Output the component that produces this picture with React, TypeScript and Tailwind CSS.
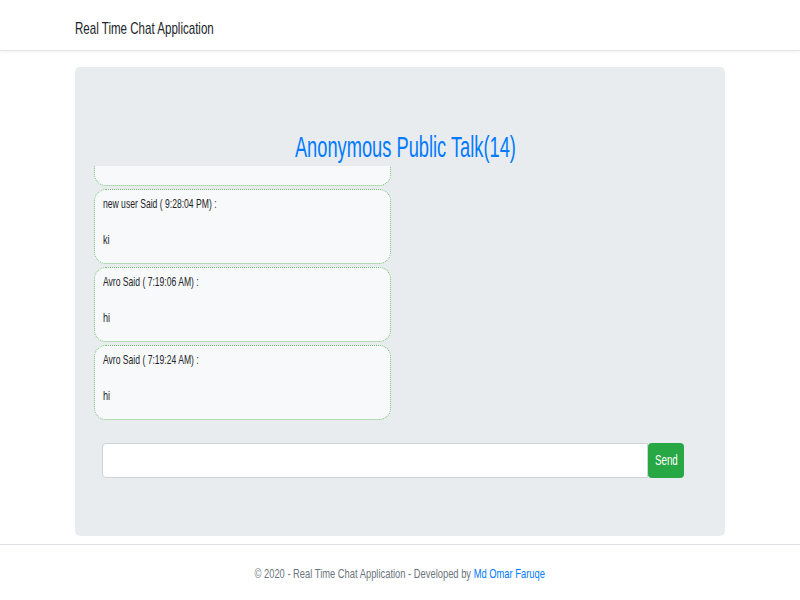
import React from 'react';

interface Message {
  user: string;
  time: string;
  text: string;
}

const messages: Message[] = [
  { user: 'new user', time: '9:27:50 PM', text: 'hello' },
  { user: 'new user', time: '9:28:04 PM', text: 'ki' },
  { user: 'Avro', time: '7:19:06 AM', text: 'hi' },
  { user: 'Avro', time: '7:19:24 AM', text: 'hi' },
];

const font = { fontFamily: '"Liberation Sans", Arial, sans-serif' };

const MessageBox: React.FC<{ m: Message }> = ({ m }) => (
  <div className="shrink-0 h-[75px] rounded-[12px] border border-dotted border-[#6cbf6c] bg-[#f8f9fa] px-[8px] pt-[5px] text-[13px] leading-[18px] text-[#212529] whitespace-nowrap">
    <div>
      <span className="inline-block origin-left scale-x-[0.66]">
        {m.user} Said ( {m.time}) :
      </span>
    </div>
    <div className="mt-[18px]">
      <span className="inline-block origin-left scale-x-[0.7]">{m.text}</span>
    </div>
  </div>
);

export default function App() {
  return (
    <div className="min-h-[600px] bg-white flex flex-col" style={font}>
      <nav className="h-[51px] border-b border-[#e5e5e5] shadow-[0_1px_3px_rgba(0,0,0,0.06)] bg-white">
        <div className="w-[650px] mx-auto h-full flex items-center pt-[7px] whitespace-nowrap">
          <span className="inline-block origin-left scale-x-[0.68] text-[17px] text-[#212529]">
            Real Time Chat Application
          </span>
        </div>
      </nav>

      <main className="w-[650px] mx-auto mt-[16px]">
        <div className="h-[469px] rounded-[5px] bg-[#e9ecef] pt-[61px]">
          <h2 className="text-center text-[29px] leading-[38px] text-[#007bff] ml-[10px] whitespace-nowrap">
            <span className="inline-block scale-x-[0.63]">Anonymous Public Talk(14)</span>
          </h2>
          <div className="ml-[19px] w-[297px] h-[254px] overflow-hidden flex flex-col justify-end gap-[3px]">
            {messages.map((m, i) => (
              <MessageBox key={i} m={m} />
            ))}
          </div>
          <div className="flex ml-[27px] mt-[23px]">
            <input
              type="text"
              className="w-[546px] h-[35px] bg-white border border-[#ced4da] rounded-l-[4px] outline-none"
            />
            <button className="w-[36px] h-[35px] bg-[#28a745] text-white text-[14px] rounded-[4px] flex items-center justify-center whitespace-nowrap">
              <span className="inline-block scale-x-[0.7]">Send</span>
            </button>
          </div>
        </div>
      </main>

      <footer className="mt-[8px] border-t border-[#dee2e6] flex-1 flex items-center justify-center h-[56px] pt-[2px] whitespace-nowrap">
        <span className="inline-block scale-x-[0.72] text-[13px] text-[#6c757d]">
          © 2020 - Real Time Chat Application - Developed by{' '}
          <a className="text-[#007bff]">Md Omar Faruqe</a>
        </span>
      </footer>
    </div>
  );
}
